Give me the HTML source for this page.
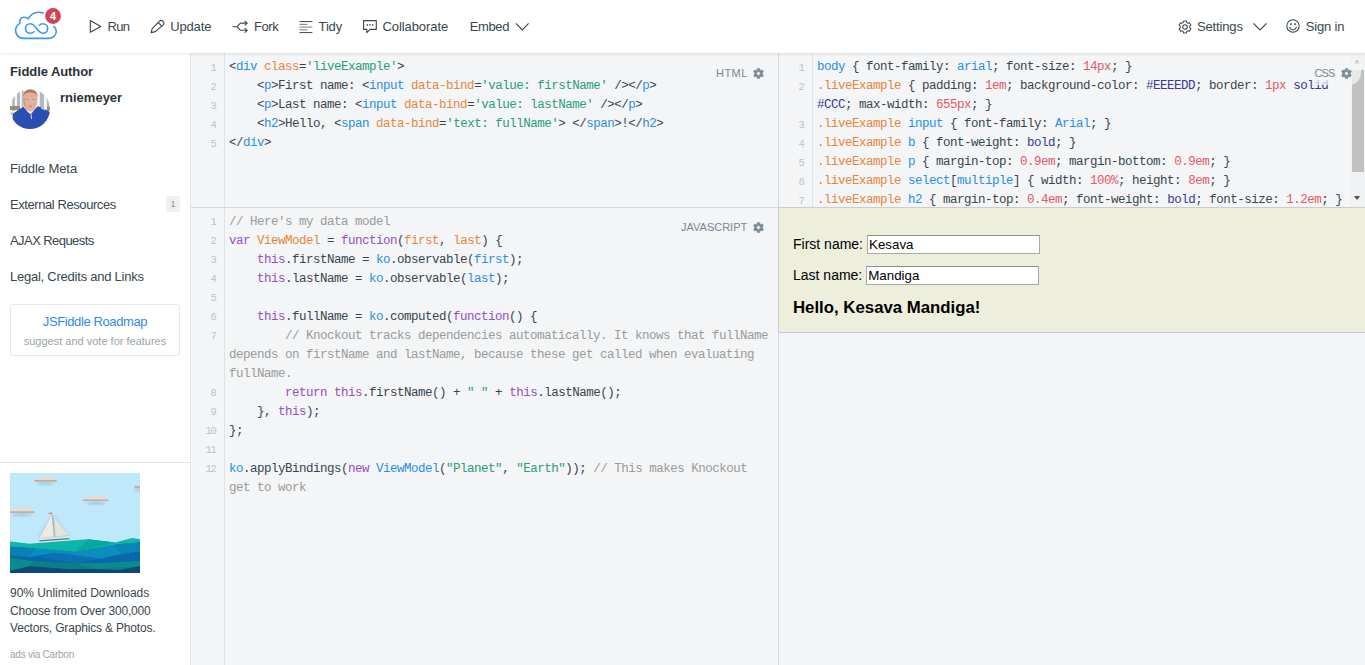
<!DOCTYPE html>
<html lang="en">
<head>
<meta charset="utf-8">
<title>Edit fiddle - JSFiddle</title>
<style>
*{box-sizing:border-box;margin:0;padding:0}
html,body{width:1365px;height:665px;overflow:hidden;background:#fff}
body{font-family:"Liberation Sans",sans-serif;font-size:13px;color:#39464e;position:relative}
#header{position:absolute;left:0;top:0;width:1365px;height:53px;background:#fff;z-index:5;box-shadow:0 1px 3px rgba(0,0,0,.10)}
#header .item{position:absolute;top:0;height:53px;line-height:53px;font-size:13px;color:#39464e;white-space:nowrap}
#header svg{position:absolute}
#sidebar{position:absolute;left:0;top:53px;width:191px;height:612px;background:#fff;border-right:1px solid #e4e8eb}
#sidebar h3{position:absolute;left:10px;top:10.5px;font-size:13px;font-weight:bold;color:#2a3339;line-height:16px}
#sidebar .user{position:absolute;left:60px;top:37px;font-size:13px;font-weight:bold;color:#2a3339;line-height:16px}
#sidebar .avatar{position:absolute;left:10px;top:36px;width:40px;height:40px;border-radius:50%;overflow:hidden}
#sidebar .nav{position:absolute;left:10px;font-size:13px;color:#39464e;line-height:16px}
#sidebar .badge{position:absolute;left:166px;top:143px;width:14px;height:16px;background:#eef0f1;border-radius:2px;font-size:9px;line-height:16px;text-align:center;color:#8a949b}
#roadmap{position:absolute;left:10px;top:251px;width:170px;height:52px;border:1px solid #e4e8eb;border-radius:3px;text-align:center}
#roadmap a{display:block;margin-top:9px;font-size:13px;line-height:16px;color:#2e8bec;text-decoration:none}
#roadmap span{display:block;margin-top:4px;font-size:11px;line-height:14px;color:#9aa4ab}
#adbox{position:absolute;left:0;top:409px;width:190px;height:203px;border-top:1px solid #e4e8eb}
#adbox svg{position:absolute;left:10px;top:10px}
#adbox p{position:absolute;left:10px;top:121px;font-size:12px;line-height:18px;color:#39464e;white-space:nowrap}
#adbox small{position:absolute;left:10px;top:185.8px;font-size:10px;line-height:12px;color:#9aa4ab}
.panel{position:absolute;background:#f3f5f6;overflow:hidden}
.gutter{position:absolute;left:0;top:0;bottom:0;width:34px;background:#f3f5f6;border-right:1px solid #dfe3e6}
.code{position:absolute;left:0;top:4px;right:0;font-family:"Liberation Mono",monospace;font-size:12.5px;letter-spacing:-0.5px;line-height:19px;color:#39464e}
.ln{position:relative;padding-left:38px;white-space:pre-wrap;word-break:normal}
.ln i{position:absolute;left:0;top:0;width:26px;padding-right:1.6px;text-align:right;font-style:normal;font-size:10.5px;letter-spacing:-1.3px;color:#bac3ca}
.label{position:absolute;font-size:11px;letter-spacing:.45px;color:#7b8893;line-height:14px;white-space:nowrap}
.t{color:#2b8fe8}.a{color:#e8853c}.s{color:#2a9d7c}.c{color:#9b9b9b}.k{color:#9450c9}.n{color:#e55a64}.v{color:#3a3799}.d{color:#e8853c}
.gear{position:absolute;left:37.2px;top:1.9px}
.lb{padding:4px 0 5px 1px;margin:-4px 0 0 -1px;width:47.5px;background:rgba(243,245,246,.72);border-radius:0 0 12px 0}
.lb .gear{left:27.7px;top:5.9px}
.sb{position:absolute;right:0;top:0;width:15px;height:154px;background:#f1f2f3}
.sb b{position:absolute;left:1.5px;top:17px;width:12.5px;height:102px;background:#c1c1c1}
.sb u{position:absolute;left:4.3px;width:0;height:0;border:3.5px solid transparent}
.sb .up{top:7px;border-bottom:4px solid #a3a3a3;border-top:0}
.sb .dn{top:143px;border-top:4px solid #505050;border-bottom:0}
.vdiv{position:absolute;left:778px;top:53px;width:1px;height:612px;background:#d3d8dc;z-index:2}
.hdiv{position:absolute;left:191px;top:207px;width:1174px;height:1px;background:#d3d8dc;z-index:2}
.live{position:absolute;left:-1px;top:-1px;width:700px;height:126px;border:1px solid #ccc;background:#eeeedd;padding:14px;font:14px "Liberation Sans",sans-serif;color:#000;z-index:3}
.live p{margin:12.6px 0;height:18.6px;line-height:18.6px;white-space:nowrap}
.live p+p{margin-bottom:0}
.live .inp{display:inline-block;box-sizing:border-box;outline:0;border-radius:0;font-family:"Liberation Sans",sans-serif;color:#000;vertical-align:top;position:relative;top:.6px;width:173px;height:18.5px;margin:0 0 0 -.2px;border:1px solid #a9a9a9;border-top-color:#8e8e8e;background:#fff;font-size:13.33px;line-height:18.5px;padding:0 0 0 1.3px}
.live h2{font-size:16.8px;margin:13.5px 0 0;line-height:19px;font-weight:bold;white-space:nowrap}
#html .code,#css .code{top:5.3px}
#js .code{top:4.9px}
#html .ln i,#css .ln i{top:.8px}
</style>
</head>
<body>
<div id="header">
<svg width="72" height="53" viewBox="0 0 72 53" style="left:0;top:0">
<g fill="none" stroke="#3897f0" stroke-width="1.6" stroke-linecap="round" stroke-linejoin="round">
<path d="M43.2 12.9C41.9 12.4 40.5 12.2 39 12.2C34.2 12.2 30.2 14.9 28.3 18.8C27 17.8 25.5 17.3 23.8 17.3C21 17.3 19.2 19.8 19.7 23.6C17.2 24.8 15.6 27.4 15.6 30.5C15.6 34.9 19.2 38.4 23.8 38.4L48.4 38.4C52.8 38.4 56.3 35.2 56.3 31.2C56.3 29.3 55.3 27.6 53.8 26.4"/>
<path d="M33.9 31.8C32.9 32.8 31.8 33.3 30.4 33.3C27.6 33.3 25.5 31.2 25.5 28.5C25.5 25.8 27.6 23.7 30.4 23.7C35.5 23.7 37.7 33.3 42.8 33.3C45.6 33.3 47.7 31.2 47.7 28.5C47.7 25.8 45.6 23.7 42.8 23.7C41.4 23.7 40.3 24.2 39.3 25.2"/>
</g>
<circle cx="53" cy="16" r="7.9" fill="#cf4357"/>
<text x="53" y="20" text-anchor="middle" font-family="Liberation Sans, sans-serif" font-weight="bold" font-size="11" fill="#fff">4</text>
</svg>
<svg width="14" height="16" viewBox="0 0 14 16" style="left:89px;top:18px"><path d="M1.3 2.5L11.8 8.4L1.3 14.3Z" fill="none" stroke="#39464e" stroke-width="1.1" stroke-linejoin="round"/></svg>
<div class="item" style="left:107.6px;letter-spacing:-.75px">Run</div>
<svg width="16" height="16" viewBox="0 0 16 16" style="left:149px;top:18px"><g fill="none" stroke="#39464e" stroke-width="1.1" stroke-linejoin="round" stroke-linecap="round"><path d="M2.1 14.6L3.2 10.6L10.6 3.2a2.2 2.2 0 0 1 3.1 0l.5.5a2.2 2.2 0 0 1 0 3.1L6.3 13.6Z"/><path d="M9.2 4.6L12.8 8.2"/></g></svg>
<div class="item" style="left:170.2px;letter-spacing:-.14px">Update</div>
<svg width="18" height="16" viewBox="0 0 18 16" style="left:231px;top:18px"><g fill="none" stroke="#39464e" stroke-width="1.1" stroke-linejoin="round" stroke-linecap="round"><path d="M2 8.7H6L9.5 5.1H16M6 8.7L9.5 12.3H16"/><path d="M14 3.1L16 5.1L14 7.1M14 10.3L16 12.3L14 14.3"/></g></svg>
<div class="item" style="left:254px;letter-spacing:-.45px">Fork</div>
<svg width="16" height="16" viewBox="0 0 16 16" style="left:298px;top:18px"><g stroke="#39464e" stroke-width="1"><path d="M1.5 3.6H14.4M1.5 14.6H14.4"/><path d="M1.5 6.35H9.4M1.5 9.1H14.4M1.5 11.85H9.4" opacity=".7"/></g></svg>
<div class="item" style="left:318.6px;letter-spacing:-.17px">Tidy</div>
<svg width="16" height="16" viewBox="0 0 16 16" style="left:362px;top:18px"><g fill="none" stroke="#39464e" stroke-width="1.1" stroke-linejoin="round"><path d="M1.6 2.6H14.3V11.4H8L4.8 14.6V11.4H1.6Z"/></g><g fill="#39464e"><rect x="4.6" y="6.2" width="1.4" height="1.4"/><rect x="7.2" y="6.2" width="1.4" height="1.4"/><rect x="9.8" y="6.2" width="1.4" height="1.4"/></g></svg>
<div class="item" style="left:382.5px;letter-spacing:-.08px">Collaborate</div>
<div class="item" style="left:469.8px;letter-spacing:-.4px">Embed</div>
<svg width="16" height="12" viewBox="0 0 16 12" style="left:514px;top:21px"><path d="M2 2.4L8.3 8.9L14.6 2.4" fill="none" stroke="#39464e" stroke-width="1.1"/></svg>
<svg width="16" height="16" viewBox="0 0 16 16" style="left:1176.5px;top:18.5px"><g fill="none" stroke="#39464e" stroke-width="1.05" stroke-linejoin="round"><path d="M9.66 3.39L9.40 2.01L6.60 2.01L6.34 3.39L4.84 4.26L3.52 3.79L2.11 6.22L3.18 7.13L3.18 8.87L2.11 9.78L3.52 12.21L4.84 11.74L6.34 12.61L6.60 13.99L9.40 13.99L9.66 12.61L11.16 11.74L12.48 12.21L13.89 9.78L12.82 8.87L12.82 7.13L13.89 6.22L12.48 3.79L11.16 4.26Z"/><circle cx="8" cy="8" r="2.3"/></g></svg>
<div class="item" style="left:1197px;letter-spacing:-.15px">Settings</div>
<svg width="16" height="12" viewBox="0 0 16 12" style="left:1251.5px;top:20.6px"><path d="M1.5 2.4L8 9L14.5 2.4" fill="none" stroke="#39464e" stroke-width="1.1"/></svg>
<svg width="16" height="16" viewBox="0 0 16 16" style="left:1285.2px;top:18.3px"><g fill="none" stroke="#39464e" stroke-width="1.05" stroke-linecap="round"><circle cx="8" cy="8" r="6.2"/><path d="M4.6 9.2C5.2 11 6.5 11.9 8 11.9C9.5 11.9 10.8 11 11.4 9.2"/></g><ellipse cx="5.9" cy="6.1" rx=".8" ry="1.2" fill="#39464e"/><ellipse cx="10.1" cy="6.1" rx=".8" ry="1.2" fill="#39464e"/></svg>
<div class="item" style="left:1305.8px;letter-spacing:-.18px">Sign in</div>
</div>
<div id="sidebar">
<h3 style="letter-spacing:-.07px">Fiddle Author</h3>
<div class="avatar"><svg width="40" height="40" viewBox="0 0 40 40">
<defs><filter id="bl" x="-10%" y="-10%" width="120%" height="120%"><feGaussianBlur stdDeviation=".7"/></filter></defs>
<rect width="40" height="40" fill="#fff"/>
<g filter="url(#bl)">
<rect x="-2" y="-2" width="44" height="44" fill="#f4f5f6"/>
<g fill="#b4b9be"><rect x="2.2" y="4" width="2.6" height="18"/><rect x="7" y="2" width="3" height="19"/><rect x="11.8" y="0" width="1.8" height="18"/><rect x="29.8" y="1" width="4.2" height="18"/><rect x="36.8" y="8" width="2.8" height="14"/></g>
<g fill="#9a8f68"><rect x="0" y="17" width="10" height="4"/><rect x="37" y="17.5" width="3" height="4"/></g>
<rect x="0" y="23.5" width="6" height="3" fill="#c9c1a8"/>
<path d="M13 9C13 3 16 .6 20.3 .6C24.6 .6 27.6 3 27.6 9C27.6 15 25.5 22.5 20.3 22.5C15.1 22.5 13 15 13 9Z" fill="#e3b29c"/>
<path d="M13.1 7.5C13.3 2.5 16.5 .4 20.3 .4C24.1 .4 27.3 2.5 27.5 7.5C26 4.6 24 3.6 20.3 3.6C16.6 3.6 14.6 4.6 13.1 7.5Z" fill="#b07a58"/>
<g fill="#a9705a" opacity=".7"><ellipse cx="17.3" cy="10.3" rx="1.3" ry=".6"/><ellipse cx="23.4" cy="10.3" rx="1.3" ry=".6"/><ellipse cx="20.4" cy="17.2" rx="2" ry=".6"/></g><path d="M13.2 9C13.2 15 15.2 21 18 22.3C15.5 19 14.6 13 14.8 8Z" fill="#c9917a" opacity=".7"/>
<path d="M3 25C6 22.5 10 19.5 13.5 17.8C15.5 20.5 17.5 23.5 20.8 25.2C23 22.5 25.5 19.5 27.8 17.2C32 18.5 36 20.5 40 23V42H5C2.5 36 2 30 3 25Z" fill="#2950b2"/>
<path d="M21.2 25.5L21.5 30" stroke="#e8ecf6" stroke-width=".9"/>
<path d="M31 18.7L35.5 21" stroke="#b9c6ea" stroke-width="1.3"/>
</g>
</svg></div>
<div class="user">rniemeyer</div>
<div class="nav" style="top:108px;letter-spacing:-.08px">Fiddle Meta</div>
<div class="nav" style="top:144px;letter-spacing:-.425px">External Resources</div>
<div class="badge">1</div>
<div class="nav" style="top:180px;letter-spacing:-.565px">AJAX Requests</div>
<div class="nav" style="top:216px;letter-spacing:-.237px">Legal, Credits and Links</div>
<div id="roadmap"><a style="letter-spacing:-.385px">JSFiddle Roadmap</a><span>suggest and vote for features</span></div>
<div id="adbox">
<svg width="130" height="100" viewBox="0 0 130 100">
<defs><filter id="sh" x="-20%" y="-100%" width="140%" height="300%"><feGaussianBlur stdDeviation="1"/></filter><clipPath id="adc"><rect width="130" height="100"/></clipPath></defs>
<g clip-path="url(#adc)">
<rect width="130" height="100" fill="#bfe8fb"/>
<g fill="#7f9db0" opacity=".55" filter="url(#sh)"><ellipse cx="35.5" cy="10.6" rx="9" ry="1"/><ellipse cx="86" cy="30.2" rx="10" ry="1.1"/><ellipse cx="12" cy="41.8" rx="10" ry="1.1"/><ellipse cx="128" cy="16.5" rx="4" ry="1"/></g>
<path d="M25.2 8.7C23.4 8.7 23.6 6.1 26.8 5.8C28.6 4.1 32.7 4.3 33.7 4.7C35.5 2.4 42.4 2.7 43.3 5.4C47.3 5.4 47.6 8.7 45.8 8.7Z" fill="#e4ddd0"/><path d="M24.6 7.1H46.4C47.3 7.9 46.6 8.7 45.8 8.7H25.2C24.4 8.7 23.7 7.9 24.6 7.1Z" fill="#bfae98"/><path d="M73.9 28.1C72.1 28.1 72.3 25.1 75.8 24.8C77.9 22.8 82.5 23.0 83.6 23.5C85.7 20.8 93.4 21.2 94.5 24.3C98.9 24.3 99.2 28.1 97.4 28.1Z" fill="#e4ddd0"/><path d="M73.3 26.5H98.0C98.9 27.3 98.2 28.1 97.4 28.1H73.9C73.1 28.1 72.4 27.3 73.3 26.5Z" fill="#bfae98"/><path d="M-2.8 39.9C-4.6 39.9 -4.4 37.0 -0.5 36.6C1.8 34.7 6.9 34.8 8.1 35.4C10.4 32.8 19.0 33.1 20.2 36.1C25.1 36.1 25.4 39.9 23.6 39.9Z" fill="#e4ddd0"/><path d="M-3.4 38.3H24.2C25.1 39.1 24.4 39.9 23.6 39.9H-2.8C-3.6 39.9 -4.3 39.1 -3.4 38.3Z" fill="#bfae98"/><path d="M125.0 14.7C123.2 14.7 123.4 12.7 126.9 12.4C129.0 11.1 133.8 11.2 134.8 11.5C136.9 9.8 144.8 10.0 145.8 12.1C150.3 12.1 150.6 14.7 148.8 14.7Z" fill="#e4ddd0"/><path d="M124.4 13.1H149.4C150.3 13.9 149.6 14.7 148.8 14.7H125.0C124.2 14.7 123.5 13.9 124.4 13.1Z" fill="#bfae98"/>
<path d="M28 66C30 60 34 52 41.5 42.8L45 43.5C50 50 55 56 59 62.5L60 66Z" fill="#8fb4c8" opacity=".35" filter="url(#sh)"/>
<path d="M29 65.4L59.5 63.2L58.8 67.2C52 70.6 38 71.6 30 70.3Z" fill="#ebe5d8"/>
<path d="M29.3 67.2L59.2 65L59 66.2L29.6 68.5Z" fill="#2d7fb8"/>
<path d="M41.8 42.4L29.8 64.7L43.9 63.4Z" fill="#f0ebe0"/><path d="M44.5 44.7L57.9 62L45.7 63.2Z" fill="#e9e3d6"/>
<path d="M42.3 41.5L44.5 64" stroke="#8fa3b3" stroke-width=".7"/>
<path d="M42.2 38.9L36.9 40.6L42.3 41.5Z" fill="#f28b7e"/>
<path d="M0 68.5L19.6 70.7L50 68.3L78.2 66.2L105.3 69.5L121.9 65L130 66.2V82H0Z" fill="#0cb6ab"/>
<path d="M78.2 66.2L105.3 69.5L64.7 78.5Z" fill="#07a79f"/>
<path d="M0 73.7L25.6 75.2L64.7 78.5L105.3 71.5L130 69.2V100H0Z" fill="#0b8dc0"/>
<path d="M0 73.7L25.6 75.2L19.6 84.3L0 82Z" fill="#0a80b4"/>
<path d="M105.3 71.5L130 69.2V78.2L111 81.3Z" fill="#0a83b6"/>
<path d="M0 82L19.6 84.3L45 79.7L90.3 85.8L111 81.3L130 78.2V100H0Z" fill="#0968a9"/>
<path d="M45 79.7L90.3 85.8L64.7 90.3L30 84Z" fill="#0a72b2"/>
<path d="M0 85L22.6 88L64.7 90.3L90.3 90.3L130 88V100H0Z" fill="#0a7f86"/>
<path d="M0 85L22.6 88L19.6 93.3L0 97.8Z" fill="#0b8b8f"/>
<path d="M64.7 90.3L90.3 90.3L130 88V93L85 96Z" fill="#0b8b8f"/>
<path d="M0 97.8L19.6 93.3L60 96.3L85 96L110 97L130 93V100H0Z" fill="#0b4878"/>
</g></svg>
<p style="top:120.6px;letter-spacing:-.04px">90% Unlimited Downloads</p>
<p style="top:138.6px;letter-spacing:-.173px">Choose from Over 300,000</p>
<p style="top:156.4px;letter-spacing:-.17px">Vectors, Graphics &amp; Photos.</p>
<small style="letter-spacing:-.233px">ads via Carbon</small>
</div>
</div>
<div class="vdiv"></div><div class="hdiv"></div>
<div class="panel" id="html" style="left:191px;top:53px;width:587px;height:154px"><div class="gutter"></div><div class="code">
<div class="ln"><i>1</i>&lt;<span class="t">div</span> <span class="a">class</span>=<span class="s">'liveExample'</span>&gt;</div>
<div class="ln"><i>2</i>    &lt;<span class="t">p</span>&gt;First name: &lt;<span class="t">input</span> <span class="a">data-bind</span>=<span class="s">'value: firstName'</span> /&gt;&lt;/<span class="t">p</span>&gt;</div>
<div class="ln"><i>3</i>    &lt;<span class="t">p</span>&gt;Last name: &lt;<span class="t">input</span> <span class="a">data-bind</span>=<span class="s">'value: lastName'</span> /&gt;&lt;/<span class="t">p</span>&gt;</div>
<div class="ln"><i>4</i>    &lt;<span class="t">h2</span>&gt;Hello, &lt;<span class="t">span</span> <span class="a">data-bind</span>=<span class="s">'text: fullName'</span>&gt; &lt;/<span class="t">span</span>&gt;!&lt;/<span class="t">h2</span>&gt;</div>
<div class="ln"><i>5</i>&lt;/<span class="t">div</span>&gt;</div>
</div><div class="label" style="left:525px;top:13px">HTML<svg class="gear" width="11" height="11" viewBox="0 0 11 11"><path fill="#7a8a97" fill-rule="evenodd" stroke="#7a8a97" stroke-width=".6" stroke-linejoin="round" d="M6.74 1.80L6.58 0.41L4.42 0.41L4.26 1.80L2.92 2.57L1.64 2.02L0.55 3.89L1.68 4.73L1.68 6.27L0.55 7.11L1.64 8.98L2.92 8.43L4.26 9.20L4.42 10.59L6.58 10.59L6.74 9.20L8.08 8.43L9.36 8.98L10.45 7.11L9.32 6.27L9.32 4.73L10.45 3.89L9.36 2.02L8.08 2.57ZM3.6 5.5a1.9 1.9 0 1 0 3.8 0a1.9 1.9 0 1 0 -3.8 0Z"/></svg></div></div>
<div class="panel" id="js" style="left:191px;top:208px;width:587px;height:457px"><div class="gutter"></div><div class="code">
<div class="ln"><i>1</i><span class="c">// Here's my data model</span></div>
<div class="ln"><i>2</i><span class="k">var</span> <span class="d">ViewModel</span> = <span class="k">function</span>(<span class="d">first</span>, <span class="d">last</span>) {</div>
<div class="ln"><i>3</i>    <span class="k">this</span>.firstName = <span class="t">ko</span>.observable(<span class="t">first</span>);</div>
<div class="ln"><i>4</i>    <span class="k">this</span>.lastName = <span class="t">ko</span>.observable(<span class="t">last</span>);</div>
<div class="ln"><i>5</i> </div>
<div class="ln"><i>6</i>    <span class="k">this</span>.fullName = <span class="t">ko</span>.computed(<span class="k">function</span>() {</div>
<div class="ln"><i>7</i><span class="c">        // Knockout tracks dependencies automatically. It knows that fullName
depends on firstName and lastName, because these get called when evaluating
fullName.</span></div>
<div class="ln"><i>8</i>        <span class="k">return</span> <span class="k">this</span>.firstName() + <span class="s">" "</span> + <span class="k">this</span>.lastName();</div>
<div class="ln"><i>9</i>    }, <span class="k">this</span>);</div>
<div class="ln"><i>10</i>};</div>
<div class="ln"><i>11</i> </div>
<div class="ln"><i>12</i><span class="t">ko</span>.applyBindings(<span class="k">new</span> <span class="t">ViewModel</span>(<span class="s">"Planet"</span>, <span class="s">"Earth"</span>)); <span class="c">// This makes Knockout
get to work</span></div>
</div><div class="label" style="left:490px;top:12px;letter-spacing:0">JAVASCRIPT<svg class="gear" style="left:72.2px" width="11" height="11" viewBox="0 0 11 11"><path fill="#7a8a97" fill-rule="evenodd" stroke="#7a8a97" stroke-width=".6" stroke-linejoin="round" d="M6.74 1.80L6.58 0.41L4.42 0.41L4.26 1.80L2.92 2.57L1.64 2.02L0.55 3.89L1.68 4.73L1.68 6.27L0.55 7.11L1.64 8.98L2.92 8.43L4.26 9.20L4.42 10.59L6.58 10.59L6.74 9.20L8.08 8.43L9.36 8.98L10.45 7.11L9.32 6.27L9.32 4.73L10.45 3.89L9.36 2.02L8.08 2.57ZM3.6 5.5a1.9 1.9 0 1 0 3.8 0a1.9 1.9 0 1 0 -3.8 0Z"/></svg></div></div>
<div class="panel" id="css" style="left:779px;top:53px;width:586px;height:154px"><div class="gutter"></div><div class="code">
<div class="ln"><i>1</i><span class="t">body</span> { font-family: <span class="t">arial</span>; font-size: <span class="n">14px</span>; }</div>
<div class="ln"><i>2</i><span class="a">.liveExample</span> { padding: <span class="n">1em</span>; background-color: <span class="v">#EEEEDD</span>; border: <span class="n">1px</span> <span class="v">solid</span>
<span class="v">#CCC</span>; max-width: <span class="n">655px</span>; }</div>
<div class="ln"><i>3</i><span class="a">.liveExample</span> <span class="t">input</span> { font-family: <span class="t">Arial</span>; }</div>
<div class="ln"><i>4</i><span class="a">.liveExample</span> <span class="t">b</span> { font-weight: <span class="v">bold</span>; }</div>
<div class="ln"><i>5</i><span class="a">.liveExample</span> <span class="t">p</span> { margin-top: <span class="n">0.9em</span>; margin-bottom: <span class="n">0.9em</span>; }</div>
<div class="ln"><i>6</i><span class="a">.liveExample</span> <span class="t">select</span>[<span class="t">multiple</span>] { width: <span class="n">100%</span>; height: <span class="n">8em</span>; }</div>
<div class="ln"><i>7</i><span class="a">.liveExample</span> <span class="t">h2</span> { margin-top: <span class="n">0.4em</span>; font-weight: <span class="v">bold</span>; font-size: <span class="n">1.2em</span>; }</div>
</div>
<div class="sb"><b></b><u class="up"></u><u class="dn"></u></div>
<div class="label lb" style="left:535.5px;top:13px;letter-spacing:-.9px">CSS<svg class="gear" width="11" height="11" viewBox="0 0 11 11"><path fill="#7a8a97" fill-rule="evenodd" stroke="#7a8a97" stroke-width=".6" stroke-linejoin="round" d="M6.74 1.80L6.58 0.41L4.42 0.41L4.26 1.80L2.92 2.57L1.64 2.02L0.55 3.89L1.68 4.73L1.68 6.27L0.55 7.11L1.64 8.98L2.92 8.43L4.26 9.20L4.42 10.59L6.58 10.59L6.74 9.20L8.08 8.43L9.36 8.98L10.45 7.11L9.32 6.27L9.32 4.73L10.45 3.89L9.36 2.02L8.08 2.57ZM3.6 5.5a1.9 1.9 0 1 0 3.8 0a1.9 1.9 0 1 0 -3.8 0Z"/></svg></div></div>
<div class="panel" id="result" style="left:779px;top:208px;width:586px;height:457px;overflow:visible;background:#f4f5f8">
<div class="live"><p>First name: <input class="inp" type="text" value="Kesava"></p><p>Last name: <input class="inp" type="text" value="Mandiga"></p><h2>Hello, Kesava Mandiga!</h2></div>
</div>
</body>
</html>
